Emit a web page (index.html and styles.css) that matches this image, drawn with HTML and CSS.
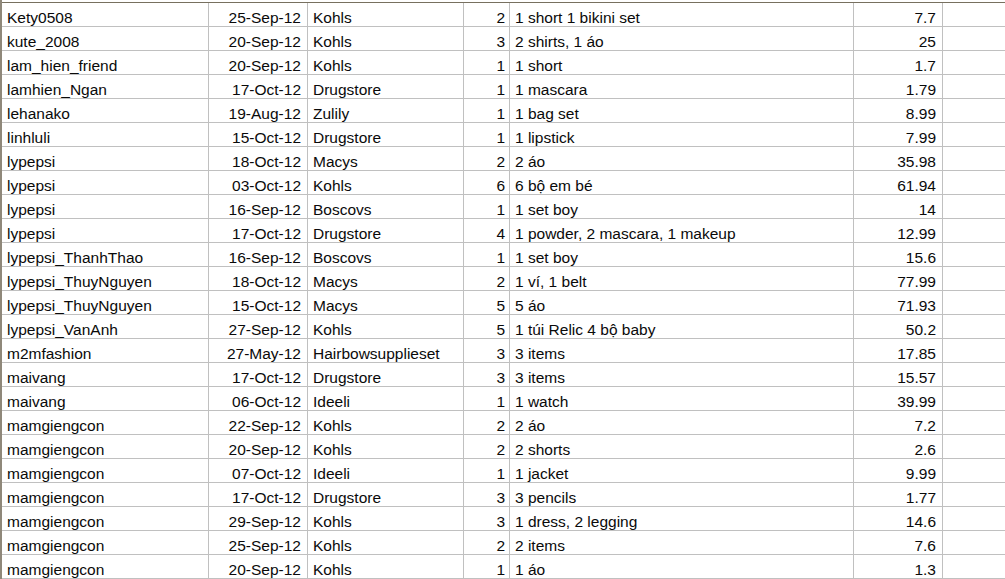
FILE: index.html
```html
<!DOCTYPE html>
<html>
<head>
<meta charset="utf-8">
<link rel="stylesheet" href="styles.css">
</head>
<body>
<div class="sheet">
<table class="grid">
<colgroup>
<col class="c-a"><col class="c-b"><col class="c-c"><col class="c-d"><col class="c-e"><col class="c-f"><col class="c-g">
</colgroup>
<tbody>
<tr><td>Kety0508</td><td class="dt">25-Sep-12</td><td>Kohls</td><td class="r">2</td><td>1 short 1 bikini set</td><td class="amt">7.7</td><td class="last"></td></tr>
<tr><td>kute_2008</td><td class="dt">20-Sep-12</td><td>Kohls</td><td class="r">3</td><td>2 shirts, 1 áo</td><td class="amt">25</td><td class="last"></td></tr>
<tr><td>lam_hien_friend</td><td class="dt">20-Sep-12</td><td>Kohls</td><td class="r">1</td><td>1 short</td><td class="amt">1.7</td><td class="last"></td></tr>
<tr><td>lamhien_Ngan</td><td class="dt">17-Oct-12</td><td>Drugstore</td><td class="r">1</td><td>1 mascara</td><td class="amt">1.79</td><td class="last"></td></tr>
<tr><td>lehanako</td><td class="dt">19-Aug-12</td><td>Zulily</td><td class="r">1</td><td>1 bag set</td><td class="amt">8.99</td><td class="last"></td></tr>
<tr><td>linhluli</td><td class="dt">15-Oct-12</td><td>Drugstore</td><td class="r">1</td><td>1 lipstick</td><td class="amt">7.99</td><td class="last"></td></tr>
<tr><td>lypepsi</td><td class="dt">18-Oct-12</td><td>Macys</td><td class="r">2</td><td>2 áo</td><td class="amt">35.98</td><td class="last"></td></tr>
<tr><td>lypepsi</td><td class="dt">03-Oct-12</td><td>Kohls</td><td class="r">6</td><td>6 bộ em bé</td><td class="amt">61.94</td><td class="last"></td></tr>
<tr><td>lypepsi</td><td class="dt">16-Sep-12</td><td>Boscovs</td><td class="r">1</td><td>1 set boy</td><td class="amt">14</td><td class="last"></td></tr>
<tr><td>lypepsi</td><td class="dt">17-Oct-12</td><td>Drugstore</td><td class="r">4</td><td>1 powder, 2 mascara, 1 makeup</td><td class="amt">12.99</td><td class="last"></td></tr>
<tr><td>lypepsi_ThanhThao</td><td class="dt">16-Sep-12</td><td>Boscovs</td><td class="r">1</td><td>1 set boy</td><td class="amt">15.6</td><td class="last"></td></tr>
<tr><td>lypepsi_ThuyNguyen</td><td class="dt">18-Oct-12</td><td>Macys</td><td class="r">2</td><td>1 ví, 1 belt</td><td class="amt">77.99</td><td class="last"></td></tr>
<tr><td>lypepsi_ThuyNguyen</td><td class="dt">15-Oct-12</td><td>Macys</td><td class="r">5</td><td>5 áo</td><td class="amt">71.93</td><td class="last"></td></tr>
<tr><td>lypepsi_VanAnh</td><td class="dt">27-Sep-12</td><td>Kohls</td><td class="r">5</td><td>1 túi Relic 4 bộ baby</td><td class="amt">50.2</td><td class="last"></td></tr>
<tr><td>m2mfashion</td><td class="dt">27-May-12</td><td>Hairbowsupplieset</td><td class="r">3</td><td>3 items</td><td class="amt">17.85</td><td class="last"></td></tr>
<tr><td>maivang</td><td class="dt">17-Oct-12</td><td>Drugstore</td><td class="r">3</td><td>3 items</td><td class="amt">15.57</td><td class="last"></td></tr>
<tr><td>maivang</td><td class="dt">06-Oct-12</td><td>Ideeli</td><td class="r">1</td><td>1 watch</td><td class="amt">39.99</td><td class="last"></td></tr>
<tr><td>mamgiengcon</td><td class="dt">22-Sep-12</td><td>Kohls</td><td class="r">2</td><td>2 áo</td><td class="amt">7.2</td><td class="last"></td></tr>
<tr><td>mamgiengcon</td><td class="dt">20-Sep-12</td><td>Kohls</td><td class="r">2</td><td>2 shorts</td><td class="amt">2.6</td><td class="last"></td></tr>
<tr><td>mamgiengcon</td><td class="dt">07-Oct-12</td><td>Ideeli</td><td class="r">1</td><td>1 jacket</td><td class="amt">9.99</td><td class="last"></td></tr>
<tr><td>mamgiengcon</td><td class="dt">17-Oct-12</td><td>Drugstore</td><td class="r">3</td><td>3 pencils</td><td class="amt">1.77</td><td class="last"></td></tr>
<tr><td>mamgiengcon</td><td class="dt">29-Sep-12</td><td>Kohls</td><td class="r">3</td><td>1 dress, 2 legging</td><td class="amt">14.6</td><td class="last"></td></tr>
<tr><td>mamgiengcon</td><td class="dt">25-Sep-12</td><td>Kohls</td><td class="r">2</td><td>2 items</td><td class="amt">7.6</td><td class="last"></td></tr>
<tr><td>mamgiengcon</td><td class="dt">20-Sep-12</td><td>Kohls</td><td class="r">1</td><td>1 áo</td><td class="amt">1.3</td><td class="last"></td></tr>
</tbody>
</table>
</div>
</body>
</html>
```

FILE: styles.css
```css
html, body {
  margin: 0;
  padding: 0;
  background: #ffffff;
  overflow: hidden;
}
.sheet {
  padding-top: 2px;
  border-left: 2px solid #8f887a;
  width: 1003px;
  overflow: hidden;
}
.grid {
  border-collapse: separate;
  border-spacing: 0;
  table-layout: fixed;
  width: 1003px;
  border-top: 1px solid #77705f;
  font-family: "Liberation Sans", Arial, sans-serif;
  font-size: 15.5px;
  color: #0a0a0a;
}
.c-a { width: 207px; }
.c-b { width: 99px; }
.c-c { width: 156px; }
.c-d { width: 46px; }
.c-e { width: 344px; }
.c-f { width: 89px; }
.c-g { width: 62px; }
.grid td {
  box-sizing: border-box;
  height: 24px;
  padding: 0 4px 0 5px;
  border-right: 1px solid #c0c0c0;
  border-bottom: 1px solid #c0c0c0;
  vertical-align: bottom;
  line-height: 17px;
  white-space: nowrap;
  overflow: hidden;
}
.grid td.r {
  text-align: right;
  padding: 0 4px 0 3px;
}
.grid td.dt {
  text-align: right;
  padding: 0 6px 0 3px;
}
.grid td.amt {
  text-align: right;
  padding: 0 6px 0 3px;
}
.grid td.last {
  border-right: none;
}
```
